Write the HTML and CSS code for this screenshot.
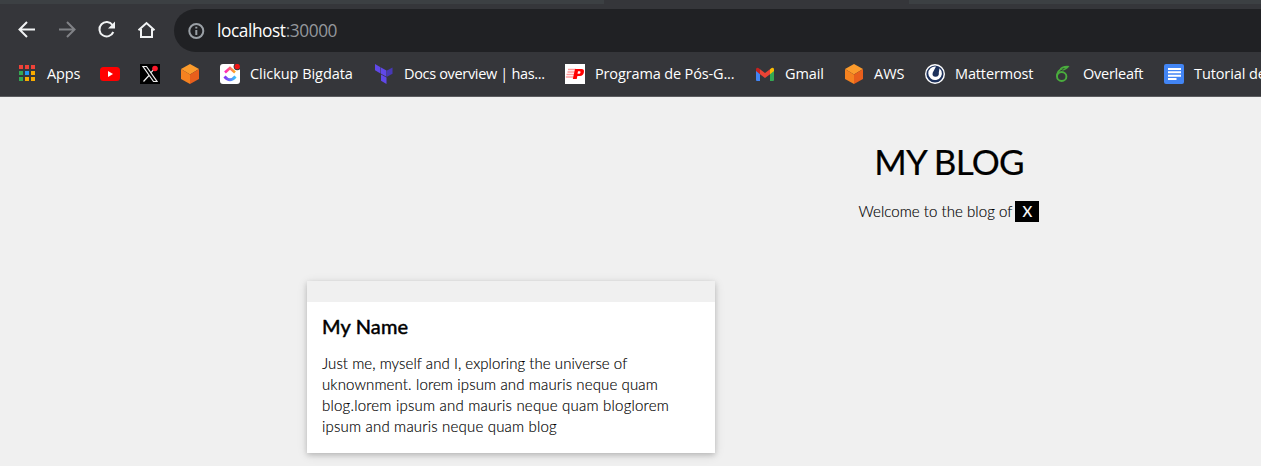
FILE: index.html
```html
<!DOCTYPE html>
<html lang="en">
<head>
<meta charset="utf-8">
<title>My Blog</title>
<link rel="stylesheet" href="styles.css">
</head>
<body>
<div class="browser">
  <div class="tabs"><div class="active-tab"></div></div>
  <div class="toolbar">
    <div class="nav">
      <svg viewBox="0 0 20 20"><path d="M18 9.500H3M10 2 2.500 9.500l7.500 7.500" fill="none" stroke="#f1f3f4" stroke-width="2"/></svg>
      <svg viewBox="0 0 20 20"><path d="M2 9.500h15M10 2 17.500 9.500 10 17" fill="none" stroke="#808286" stroke-width="2"/></svg>
      <svg viewBox="0 0 20 20"><path d="M15.500 5A7.200 7.200 0 1 0 16.300 12" fill="none" stroke="#f1f3f4" stroke-width="2"/><path d="M18 1.500V8.500H11Z" fill="#f1f3f4"/></svg>
      <svg viewBox="0 0 20 20"><path d="M1.500 10.300 9.500 3l8 7.300M4 9v8h11V9" fill="none" stroke="#f1f3f4" stroke-width="2"/></svg>
    </div>
    <div class="address">
      <svg viewBox="0 0 18 18"><circle cx="9.300" cy="9" r="7" fill="none" stroke="#9aa0a6" stroke-width="2"/><path d="M9.300 8v5M9.300 4.800v1.800" stroke="#9aa0a6" stroke-width="2"/></svg>
      <span class="url">localhost<span class="port">:30000</span></span>
    </div>
  </div>
  <div class="bookmarks">
    <div class="mark"><svg viewBox="0 0 20 20"><path d="M2 1h4v4H2zM8 1h4v4H8zM14 1h4v4h-4z" fill="#ef4238"/><path d="M2 7h4v4H2zM2 13h4v4H2z" fill="#34a853"/><path d="M8 7h4v4H8z" fill="#2196f3"/><path d="M14 7h4v4h-4zM8 13h4v4H8zM14 13h4v4h-4z" fill="#f9ab00"/></svg><span class="t-apps">Apps</span></div>
    <div class="mark"><svg viewBox="0 0 20 20"><rect y="3" width="20" height="14" rx="3.500" fill="#f00"/><path d="m8 7 5 3-5 3z" fill="#fff"/></svg></div>
    <div class="mark"><svg viewBox="0 0 20 20"><path d="M0 0h20v20H0z" fill="#000"/><path d="M3 2.500h3.500L17 17.500h-3.500zM16 3l-5.500 6.200M9 11.500 3.500 17.500" fill="none" stroke="#eee" stroke-width="1.200"/><circle cx="15" cy="4.500" r="2.800" fill="#ff1a2b"/></svg></div>
    <div class="mark"><svg viewBox="0 0 20 20"><path d="m10 0 9 5-9 5.500L1 5z" fill="#fb9b2c"/><path d="M1 5l9 5.500V20l-9-5z" fill="#f58220"/><path d="m19 5-9 5.500V20l9-5z" fill="#e85f1c"/></svg></div>
    <div class="mark"><svg viewBox="0 0 20 20"><defs><linearGradient id="up"><stop stop-color="#ff20c5"/><stop offset="1" stop-color="#ffad16"/></linearGradient><linearGradient id="down"><stop stop-color="#8930f5"/><stop offset="1" stop-color="#38c5fa"/></linearGradient></defs><rect width="20" height="20" rx="3" fill="#fff"/><path d="m5 8.500 5-4.500 5 4.500" fill="none" stroke="url(#up)" stroke-width="2.600"/><path d="M4.500 12.500q5.500 6.500 11 0" fill="none" stroke="url(#down)" stroke-width="2.800"/><circle cx="17.200" cy="2.600" r="3.600" fill="#35363a"/><circle cx="17.200" cy="2.600" r="2.700" fill="#f01414"/></svg><span class="t-click">Clickup Bigdata</span></div>
    <div class="mark"><svg viewBox="0 0 20 20"><path d="m1 0 5.500 3.200v6.300L1 6.300zM7 3.500l5.500 3v6.300L7 9.700zM7 10.500l5.500 3V20L7 16.700z" fill="#6048e8"/><path d="m13 6.500 5.500-3v6.200l-5.500 3.100z" fill="#4738b5"/></svg><span class="t-docs">Docs overview | has...</span></div>
    <div class="mark"><svg viewBox="0 0 20 20"><path d="M0 0h20v20H0z" fill="#fff"/><path d="M3 5.500h8M2.500 8h8M1.500 10.500h8M.8 13h8" stroke="#ff9a9a" stroke-width="1.400"/><path d="M10 5h6.500q3 0 2.400 3.200-.7 3.800-4 3.800h-2.500l-.7 3H7.800zM13 7.300l-.5 2.400h1.700q1 0 1.300-1.300.2-1.100-.8-1.100z" fill="#f00" fill-rule="evenodd"/></svg><span class="t-prog">Programa de Pós-G...</span></div>
    <div class="mark"><svg viewBox="0 0 20 20"><path d="M1 5.500 5 8v9H2q-1 0-1-1z" fill="#4285f4"/><path d="M15 8l4-2.500V16q0 1-1 1h-3z" fill="#34a853"/><path d="M15 5.200 16.600 4Q19 3 19 5.500V7l-4 3.200z" fill="#fbbc04"/><path d="M1 7V5.500Q1 3 3.400 4L5 5.200V10.200z" fill="#c5221f"/><path d="m5 5.200 5 3.900 5-3.900v5l-5 3.900-5-3.900z" fill="#ea4335"/></svg><span class="t-gmail">Gmail</span></div>
    <div class="mark"><svg viewBox="0 0 20 20"><path d="m10 0 9 5-9 5.500L1 5z" fill="#fb9b2c"/><path d="M1 5l9 5.500V20l-9-5z" fill="#f58220"/><path d="m19 5-9 5.500V20l9-5z" fill="#e85f1c"/></svg><span class="t-aws">AWS</span></div>
    <div class="mark"><svg viewBox="0 0 20 20"><circle cx="10" cy="10" r="10" fill="#fff"/><circle cx="10" cy="10" r="8.600" fill="#1e325c"/><path d="M11 2.500A6.800 6.800 0 1 0 16.500 7L14.500 4.200 13.800 8.500q.7 4-3.200 4.300Q6.500 12.500 7.800 8.500z" fill="#fff"/><path d="M12.300 3.500 8.500 8.500q-1 2.800 1.700 3.300 2.700 0 2.600-2.600z" fill="#1e325c"/></svg><span class="t-matter">Mattermost</span></div>
    <div class="mark"><svg viewBox="0 0 20 20"><ellipse cx="8.700" cy="12.500" rx="4.700" ry="4.500" fill="none" stroke="#4aad3d" stroke-width="1.900"/><path d="M4 12.500Q4 6.500 9.500 4.500" fill="none" stroke="#4aad3d" stroke-width="1.800"/><path d="M6.500 5.500Q8.500 1.200 16.500 2q-3 4.300-7.500 4.800 1-2 3.500-2.900-4 .3-6 1.600z" fill="#4aad3d"/></svg><span class="t-over">Overleaft</span></div>
    <div class="mark"><svg viewBox="0 0 20 20"><rect width="20" height="20" rx="2" fill="#4285f4"/><path d="M4 5h13M4 8.300h13M4 11.700h13M4 15h8.500" stroke="#fff" stroke-width="1.900"/></svg><span class="t-tutorial">Tutorial de</span></div>
  </div>
</div>
<main class="page">
  <header class="blog-header">
    <h1>MY BLOG</h1>
    <p><span class="welcome">Welcome to the blog of</span><span class="tag">X</span></p>
  </header>
  <article class="card">
    <div class="card-image"></div>
    <div class="card-body">
      <h4>My Name</h4>
      <p><span class="l1">Just me, myself and I, exploring the universe of</span><br><span class="l2">uknownment. lorem ipsum and mauris neque quam</span><br><span class="l3">blog.lorem ipsum and mauris neque quam bloglorem</span><br><span class="l4">ipsum and mauris neque quam blog</span></p>
    </div>
  </article>
</main>
</body>
</html>
```
FILE: styles.css
```css
* { box-sizing: border-box; }
body { margin: 0; width: 1261px; height: 466px; overflow: hidden; background: #f0f0f0; }
svg { display: block; flex: none; }
.browser { height: 97px; background: #35363a; border-bottom: 1px solid #5b5c5f; font-family: "Open Sans", "Noto Sans", sans-serif; overflow: hidden; }
.tabs { height: 4px; background: #3c4043; padding-left: 604px; }
.active-tab { width: 305px; height: 4px; background: #35363a; }
.toolbar { height: 53px; display: flex; padding: 5px 0 5px 17px; }
.nav { display: flex; gap: 20px; width: 157px; padding-top: 11px; }
.nav svg { width: 20px; height: 20px; }
.address { flex: 1; height: 43px; border-radius: 22px 0 0 22px; background: #202124; display: flex; align-items: center; padding-left: 13px; gap: 12px; }
.address svg { width: 18px; height: 18px; }
.url { font-size: 17.3px; letter-spacing: -.42px; color: #fff; line-height: 24px; white-space: nowrap; }
.port { color: #94979c; }
.bookmarks { display: grid; grid-template-columns: 83px 40px 40px 40px 154px 191px 190px 89px 81px 128px 111px 97px; padding-left: 17px; height: 34px; align-items: center; }
.mark { display: flex; align-items: center; gap: 10px; color: #fff; font-size: 14.5px; line-height: 20px; white-space: nowrap; }
.mark svg { width: 20px; height: 20px; }
.t-apps, .t-matter, .t-prog { letter-spacing: -.14px; }
.t-click { letter-spacing: -.05px; }
.t-docs { letter-spacing: -.33px; }
.t-gmail { letter-spacing: -.1px; }
.t-over { letter-spacing: -.25px; }
.t-tutorial { letter-spacing: -.1px; }
.page { display: flex; flex-direction: column; font-family: Lato, "Open Sans", sans-serif; color: #000; }
.blog-header { width: 700px; margin-left: 599px; padding-top: 37px; text-align: center; }
h1 { margin: 0; font-size: 35px; line-height: 54px; font-weight: 400; letter-spacing: -.8px; -webkit-text-stroke: .2px #000; }
.blog-header p { margin: 13px 0 0; font-size: 15px; line-height: 21px; font-weight: 300; display: flex; justify-content: center; gap: 3px; -webkit-text-stroke: .15px; }
.welcome { letter-spacing: .05px; }
.tag { background: #000; color: #fff; width: 24px; height: 21px; font-weight: 400; }
.card { width: 408px; height: 172px; margin: 59px 0 0 307px; background: #fff; box-shadow: 0 2px 5px rgba(0,0,0,.16), 0 2px 10px rgba(0,0,0,.12); }
.card-image { height: 21px; background: #f0f0f0; }
.card-body { padding: 9px 15px; }
h4 { margin: 0; font-size: 20px; line-height: 30px; font-weight: 400; letter-spacing: .15px; -webkit-text-stroke: .5px #000; }
.card-body p { margin: 12px 0 0; font-size: 15px; line-height: 21px; font-weight: 300; white-space: nowrap; -webkit-text-stroke: .15px; }
.l1 { letter-spacing: .06px; }
.l2 { letter-spacing: .13px; }
.l3 { letter-spacing: .21px; }
.l4 { letter-spacing: .19px; }
```
